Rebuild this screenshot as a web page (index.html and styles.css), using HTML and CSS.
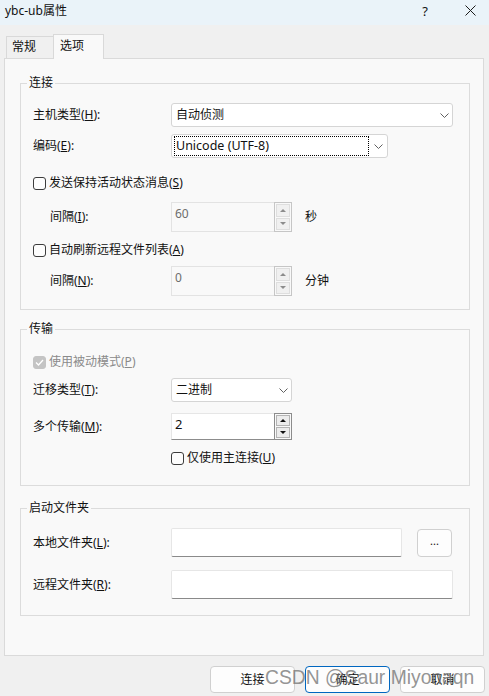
FILE: index.html
```html
<!DOCTYPE html>
<html lang="zh-CN">
<head>
<meta charset="utf-8">
<title>ybc-ub属性</title>
<link rel="stylesheet" href="styles.css">
</head>
<body>
<div class="titlebar">
  <span class="title">ybc-ub属性</span>
  <span class="help">?</span>
  <svg class="close" width="11" height="11" viewBox="0 0 11 11"><path d="M0.5 0.5L10.5 10.5M10.5 0.5L0.5 10.5" stroke="#1a1a1a" stroke-width="1" fill="none"/></svg>
</div>

<div class="tabs">
  <div class="tab">常规</div>
  <div class="tab active">选项</div>
</div>

<div class="panel">
  <div class="group g1">
    <div class="legend">连接</div>
    <div class="row mt12">
      <span class="lbl">主机类型(<u>H</u>):</span>
      <div class="combo w282"><span class="val">自动侦测</span><svg class="chev" width="9" height="5" viewBox="0 0 9 5"><path d="M0.5 0.5L4.5 4.5L8.5 0.5" stroke="#606060" fill="none"/></svg></div>
    </div>
    <div class="row mt7">
      <span class="lbl">编码(<u>E</u>):</span>
      <div class="combo w217 focused"><span class="focus">Unicode (UTF-8)</span><svg class="chev" width="9" height="5" viewBox="0 0 9 5"><path d="M0.5 0.5L4.5 4.5L8.5 0.5" stroke="#606060" fill="none"/></svg></div>
    </div>
    <div class="row cbrow mt15">
      <span class="cb"></span><span>发送保持活动状态消息(<u>S</u>)</span>
    </div>
    <div class="row mt9">
      <span class="lbl indent">间隔(<u>I</u>):</span>
      <div class="spin off">
        <div class="field">60</div>
        <div class="arrows"><div class="arrow"><span class="up"></span></div><div class="arrow"><span class="down"></span></div></div>
      </div>
      <span class="unit">秒</span>
    </div>
    <div class="row cbrow mt8">
      <span class="cb"></span><span>自动刷新远程文件列表(<u>A</u>)</span>
    </div>
    <div class="row mt6">
      <span class="lbl indent">间隔(<u>N</u>):</span>
      <div class="spin off">
        <div class="field">0</div>
        <div class="arrows"><div class="arrow"><span class="up"></span></div><div class="arrow"><span class="down"></span></div></div>
      </div>
      <span class="unit">分钟</span>
    </div>
  </div>

  <div class="group g2">
    <div class="legend">传输</div>
    <div class="row cbrow mt15 disabled">
      <span class="cb checked"><svg width="9" height="7" viewBox="0 0 9 7"><path d="M1 3.5L3.5 6L8 1" stroke="#fff" stroke-width="1.3" fill="none"/></svg></span><span>使用被动模式(<u>P</u>)</span>
    </div>
    <div class="row mt6">
      <span class="lbl">迁移类型(<u>T</u>):</span>
      <div class="combo w121"><span class="val">二进制</span><svg class="chev" width="9" height="5" viewBox="0 0 9 5"><path d="M0.5 0.5L4.5 4.5L8.5 0.5" stroke="#606060" fill="none"/></svg></div>
    </div>
    <div class="row mt11">
      <span class="lbl">多个传输(<u>M</u>):</span>
      <div class="spin on">
        <div class="field">2</div>
        <div class="arrows"><div class="arrow"><span class="up"></span></div><div class="arrow"><span class="down"></span></div></div>
      </div>
    </div>
    <div class="row cbrow mt8">
      <span class="lbl"></span>
      <span class="cb"></span><span>仅使用主连接(<u>U</u>)</span>
    </div>
  </div>

  <div class="group g3">
    <div class="legend">启动文件夹</div>
    <div class="row mt12">
      <span class="lbl">本地文件夹(<u>L</u>):</span>
      <div class="input w231"></div>
      <div class="browse">...</div>
    </div>
    <div class="row mt13">
      <span class="lbl">远程文件夹(<u>R</u>):</span>
      <div class="input w282"></div>
    </div>
  </div>
</div>

<div class="footer">
  <div class="btn">连接</div>
  <div class="btn primary">确定</div>
  <div class="btn">取消</div>
</div>

<span class="watermark">CSDN @Saur Miyonaqn</span>
</body>
</html>
```

FILE: styles.css
```css
* { box-sizing: border-box; }

body {
  margin: 0;
  width: 489px;
  height: 696px;
  overflow: hidden;
  position: relative;
  background: #f0f0f0;
  font-family: "Noto Sans", "Noto Sans CJK SC", sans-serif;
  font-size: 12px;
  line-height: 16px;
  color: #111;
}

u { text-decoration: underline; text-underline-offset: 1px; }

/* title bar */
.titlebar {
  height: 25px;
  background: #eaf3f9;
  display: flex;
  align-items: center;
  padding-left: 5px;
}
.title { flex: 1; margin-top: -3px; }
.help { font-size: 13px; margin-right: 37px; margin-top: -4px; }
.close { margin-right: 13px; margin-top: -5px; }

/* tabs */
.tabs {
  display: flex;
  align-items: flex-end;
  height: 24px;
  margin-top: 9px;
  padding-left: 6px;
}
.tab {
  height: 22px;
  width: 48px;
  border: 1px solid #d9d9d9;
  border-bottom: none;
  background: #f0f0f0;
  padding-left: 5px;
  line-height: 20px;
}
.tab.active {
  height: 25px;
  width: 51px;
  margin-left: -1px;
  margin-bottom: -1px;
  padding-left: 6px;
  background: #f9f9f9;
  line-height: 22px;
  position: relative;
  z-index: 1;
}

/* panel */
.panel {
  margin-left: 4px;
  width: 480px;
  height: 598px;
  border: 1px solid #dadada;
  background: #f9f9f9;
  padding-top: 24px;
}

.group {
  margin-left: 15px;
  width: 450px;
  border: 1px solid #dcdcdc;
  padding: 0 12px;
}
.g1 { padding-bottom: 13px; }
.g2 { margin-top: 19px; padding-bottom: 17px; }
.g3 { margin-top: 22px; padding-bottom: 16px; }

.legend {
  margin: -9px 0 0 -6px;
  padding: 0 2px;
  width: fit-content;
  height: 16px;
  line-height: 16px;
  background: #f9f9f9;
}

.row { display: flex; align-items: center; }
.cbrow { height: 20px; }
.mt6 { margin-top: 6px; }
.mt7 { margin-top: 7px; }
.mt8 { margin-top: 8px; }
.mt9 { margin-top: 9px; }
.mt11 { margin-top: 11px; }
.mt12 { margin-top: 12px; }
.mt13 { margin-top: 13px; }
.mt15 { margin-top: 15px; }

.lbl { width: 138px; flex: none; }
.lbl.indent { padding-left: 17px; }

/* combo boxes */
.combo {
  height: 24px;
  background: #fff;
  border: 1px solid #d5d5d5;
  border-radius: 3px;
  display: flex;
  align-items: center;
  padding-left: 4px;
}
.combo .val { flex: 1; }
.combo .chev { margin-right: 3px; flex: none; }
.w282 { width: 282px; }
.w217 { width: 217px; }
.w121 { width: 121px; }
.w231 { width: 231px; }

.combo.focused { padding-left: 2px; }
.focus {
  width: 195px;
  height: 20px;
  border: 1px dotted #000;
  padding-left: 1px;
  line-height: 18px;
  margin-right: 5px;
  font-size: 12.5px;
}

/* checkboxes */
.cb {
  width: 13px;
  height: 13px;
  flex: none;
  border: 1px solid #3c3c3c;
  border-radius: 3px;
  background: #fdfdfd;
  margin-right: 3px;
  display: flex;
  align-items: center;
  justify-content: center;
}
.cb.checked { background: #c4c4c4; border-color: #c4c4c4; }
.disabled { color: #8a8a8a; }

/* spin boxes */
.spin { display: flex; width: 121px; height: 30px; }
.spin.on { height: 27px; }
.spin .field {
  flex: 1;
  border: 1px solid #e3e3e3;
  border-right: none;
  background: #f9f9f9;
  color: #6d6d6d;
  padding: 3px 0 0 3px;
}
.spin.on .field {
  background: #fff;
  color: #111;
  border-color: #e6e6e6;
  border-bottom-color: #8c8c8c;
  padding: 2px 0 0 3px;
  font-size: 13px;
}
.spin .arrows {
  width: 18px;
  border: 1px solid #c6c6c6;
  padding: 1px;
  display: flex;
  flex-direction: column;
  gap: 1px;
}
.spin.on .arrows { border-color: #8c8c8c; }
.arrow {
  flex: 1;
  background: #f0f0f0;
  border: 1px solid #dedede;
  display: flex;
  align-items: center;
  justify-content: center;
}
.spin.on .arrow { background: #ececec; border-color: #b4b4b4; }
.up, .down { width: 0; height: 0; border-left: 3px solid transparent; border-right: 3px solid transparent; }
.up { border-bottom: 3px solid #8c8c8c; }
.down { border-top: 3px solid #8c8c8c; }
.spin.on .up { border-bottom-color: #111; }
.spin.on .down { border-top-color: #111; }

.unit { margin-left: 13px; }

/* text inputs */
.input {
  height: 29px;
  background: #fff;
  border: 1px solid #e6e6e6;
  border-bottom-color: #8a8a8a;
  border-radius: 2px;
}
.browse {
  margin-left: 15px;
  width: 35px;
  height: 28px;
  border: 1px solid #d0d0d0;
  border-radius: 4px;
  background: #fdfdfd;
  display: flex;
  align-items: center;
  justify-content: center;
  font-size: 11px;
  padding-bottom: 3px;
}

/* footer buttons */
.footer {
  display: flex;
  justify-content: flex-end;
  gap: 10px;
  margin-top: 10px;
  padding-right: 4px;
}
.btn {
  width: 85px;
  height: 27px;
  border: 1px solid #d0d0d0;
  border-radius: 4px;
  background: #fdfdfd;
  display: flex;
  align-items: center;
  justify-content: center;
}
.btn.primary { border-color: #0067c0; }

.watermark {
  position: absolute;
  left: 265px;
  top: 668px;
  font-family: "Liberation Sans", Arial, sans-serif;
  font-size: 19.3px;
  line-height: 20px;
  color: rgba(120, 120, 120, 0.8);
  white-space: nowrap;
}
```
